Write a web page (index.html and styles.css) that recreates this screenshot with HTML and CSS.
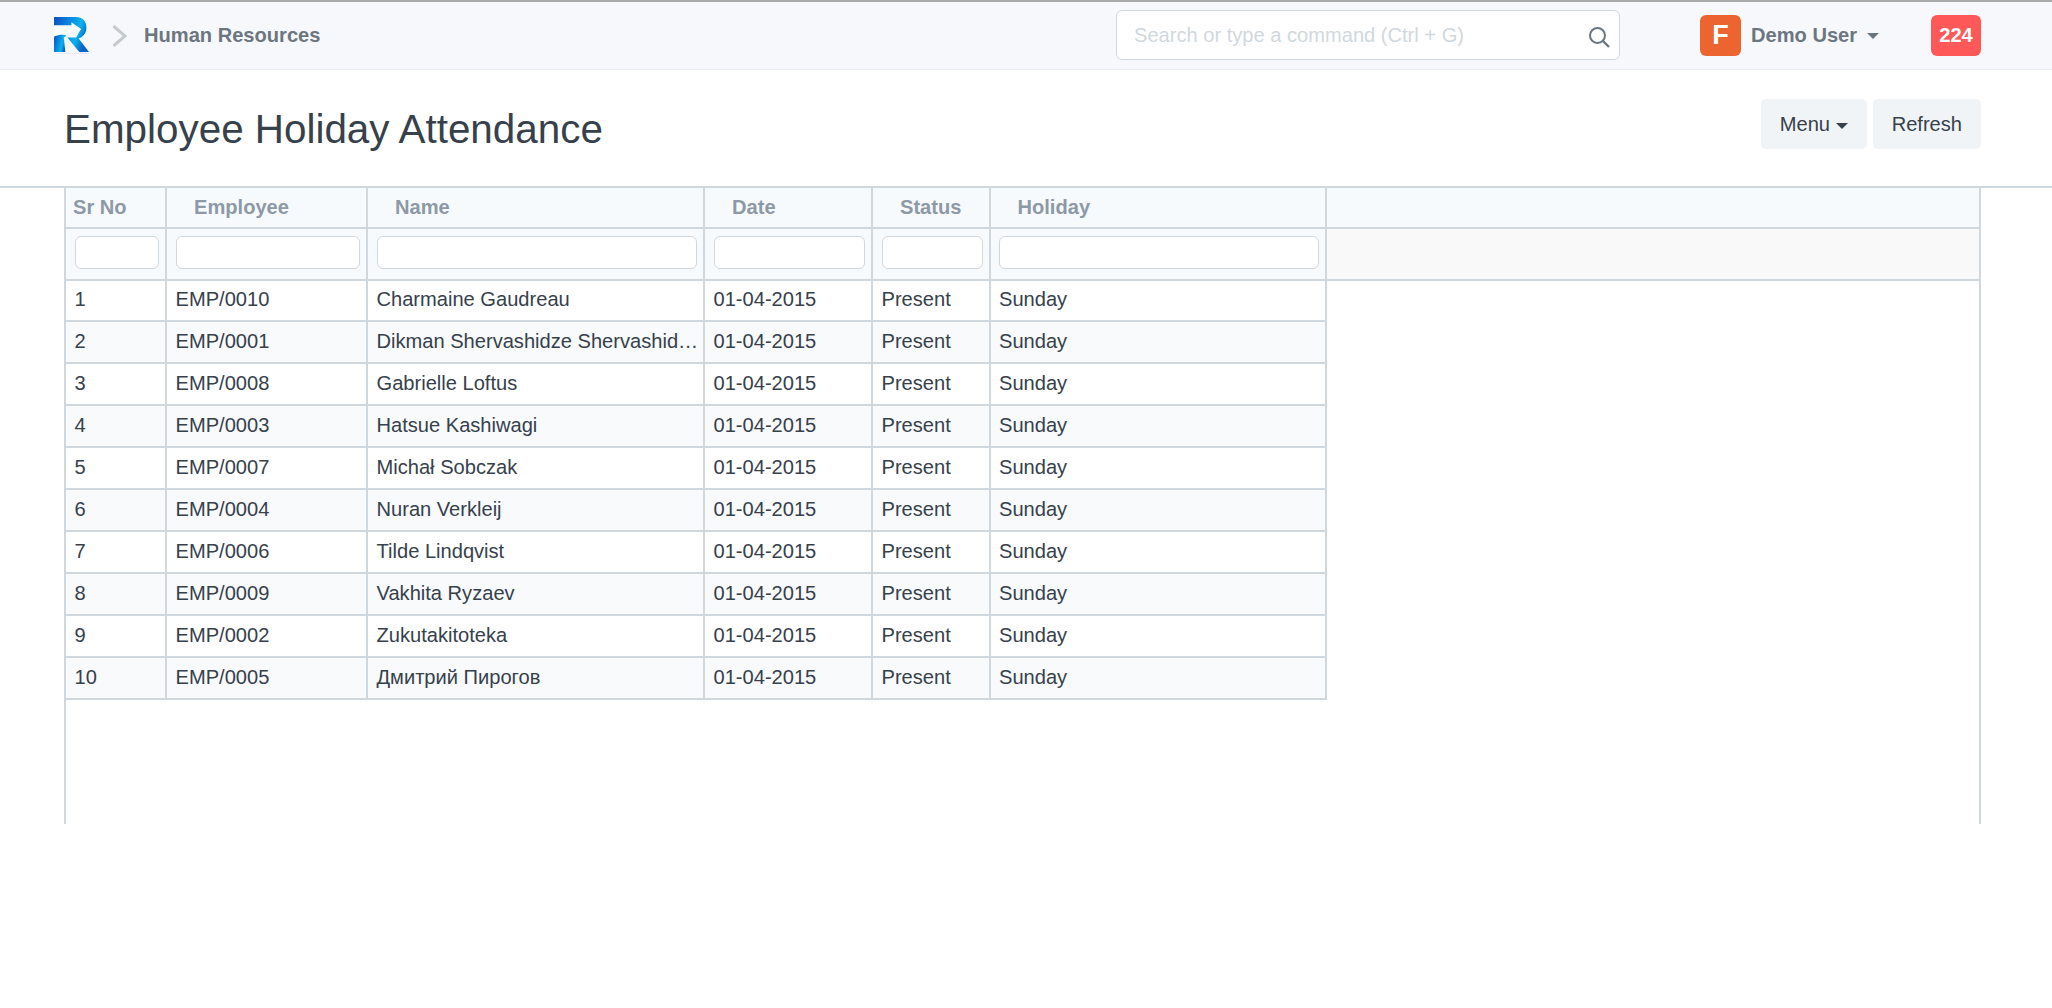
FILE: index.html
```html
<!DOCTYPE html>
<html lang="en">
<head>
<meta charset="utf-8">
<title>Employee Holiday Attendance</title>
<link rel="stylesheet" href="styles.css">
</head>
<body>
<header class="navbar">
  <div class="nav-left">
    <svg class="logo" viewBox="0 0 34 36" width="35" height="37">
      <defs>
        <linearGradient id="lg" x1="0" y1="0" x2="1" y2="0.35">
          <stop offset="0" stop-color="#0b4fc0"/>
          <stop offset="0.45" stop-color="#0a8ae0"/>
          <stop offset="0.75" stop-color="#0ab4ec"/>
          <stop offset="1" stop-color="#0a62c8"/>
        </linearGradient>
      </defs>
      <path fill="url(#lg)" d="M0 0H21C29 0 31.500 5 31.500 10.500C31.500 15.500 28.500 19.500 24 21L34 34H24.500L13 20H21.500L26 12L20 8H0Z"/>
      <path fill="url(#lg)" d="M0 19C5 17 9 17 12 18L9.500 20L11 34H0Z"/>
      <path fill="#fff" d="M0 9.500H17V5L26.500 12L17 18.500V15C10 15 4 16 0 19Z"/>
      <rect x="3" y="35" width="31" height="1" fill="#e6eafa"/>
    </svg>
    <svg class="chevron" viewBox="0 0 15 22" width="15" height="22">
      <path d="M1.500 1L13 11L1.500 21" fill="none" stroke="#c4cad0" stroke-width="3"/>
    </svg>
    <span class="crumb">Human Resources</span>
  </div>
  <div class="search">
    <input class="search-input" type="text" placeholder="Search or type a command (Ctrl + G)">
    <svg class="search-icon" viewBox="0 0 24 24" width="24" height="24">
      <circle cx="10.500" cy="10.500" r="7.500" fill="none" stroke="#6c7680" stroke-width="2"/>
      <path d="M16 16L22 22" stroke="#6c7680" stroke-width="2.400"/>
    </svg>
  </div>
  <div class="user">
    <span class="avatar">F</span>
    <span class="user-name">Demo User</span>
    <span class="caret caret-user"></span>
  </div>
  <span class="badge">224</span>
</header>

<section class="page-head">
  <h1 class="title">Employee Holiday Attendance</h1>
  <div class="actions">
    <button class="btn btn-menu">Menu <span class="caret caret-menu"></span></button>
    <button class="btn btn-refresh">Refresh</button>
  </div>
</section>

<main class="grid">
  <div class="row head">
    <div class="cell h-first">Sr No</div><div class="cell">Employee</div><div class="cell">Name</div><div class="cell">Date</div><div class="cell">Status</div><div class="cell">Holiday</div><div class="cell end"></div>
  </div>
  <div class="row filter">
    <div class="cell"><input class="fi" type="text"></div><div class="cell"><input class="fi" type="text"></div><div class="cell"><input class="fi" type="text"></div><div class="cell"><input class="fi" type="text"></div><div class="cell"><input class="fi" type="text"></div><div class="cell"><input class="fi" type="text"></div><div class="cell end"></div>
  </div>
  <div class="row data first"><div class="cell">1</div><div class="cell">EMP/0010</div><div class="cell">Charmaine Gaudreau</div><div class="cell">01-04-2015</div><div class="cell">Present</div><div class="cell">Sunday</div></div>
  <div class="row data alt"><div class="cell">2</div><div class="cell">EMP/0001</div><div class="cell">Dikman Shervashidze Shervashidze</div><div class="cell">01-04-2015</div><div class="cell">Present</div><div class="cell">Sunday</div></div>
  <div class="row data"><div class="cell">3</div><div class="cell">EMP/0008</div><div class="cell">Gabrielle Loftus</div><div class="cell">01-04-2015</div><div class="cell">Present</div><div class="cell">Sunday</div></div>
  <div class="row data alt"><div class="cell">4</div><div class="cell">EMP/0003</div><div class="cell">Hatsue Kashiwagi</div><div class="cell">01-04-2015</div><div class="cell">Present</div><div class="cell">Sunday</div></div>
  <div class="row data"><div class="cell">5</div><div class="cell">EMP/0007</div><div class="cell">Michał Sobczak</div><div class="cell">01-04-2015</div><div class="cell">Present</div><div class="cell">Sunday</div></div>
  <div class="row data alt"><div class="cell">6</div><div class="cell">EMP/0004</div><div class="cell">Nuran Verkleij</div><div class="cell">01-04-2015</div><div class="cell">Present</div><div class="cell">Sunday</div></div>
  <div class="row data"><div class="cell">7</div><div class="cell">EMP/0006</div><div class="cell">Tilde Lindqvist</div><div class="cell">01-04-2015</div><div class="cell">Present</div><div class="cell">Sunday</div></div>
  <div class="row data alt"><div class="cell">8</div><div class="cell">EMP/0009</div><div class="cell">Vakhita Ryzaev</div><div class="cell">01-04-2015</div><div class="cell">Present</div><div class="cell">Sunday</div></div>
  <div class="row data"><div class="cell">9</div><div class="cell">EMP/0002</div><div class="cell">Zukutakitoteka</div><div class="cell">01-04-2015</div><div class="cell">Present</div><div class="cell">Sunday</div></div>
  <div class="row data alt"><div class="cell">10</div><div class="cell">EMP/0005</div><div class="cell">Дмитрий Пирогов</div><div class="cell">01-04-2015</div><div class="cell">Present</div><div class="cell">Sunday</div></div>
</main>
</body>
</html>
```
FILE: styles.css
```css
* { box-sizing: border-box; }
html, body { margin: 0; padding: 0; background: #fff; }
body {
  font-family: "Liberation Sans", Arial, sans-serif;
  font-size: 20.1px;
  color: #36414c;
  height: 1008px;
  overflow: hidden;
}

.navbar {
  height: 70px;
  display: flex;
  align-items: center;
  padding: 0 71px 0 54px;
  background: #f7f8fb;
  border-top: 2px solid #a9abab;
  border-bottom: 1.500px solid #e8ebef;
}
.nav-left { display: flex; align-items: center; width: 1062px; }
.logo { display: block; margin-top: -1px; }
.chevron { margin-left: 23px; }
.crumb { margin-left: 17px; font-weight: 700; color: #6c7680; }

.search { position: relative; width: 504px; height: 50px; margin-top: -1px; }
.search-input {
  display: block;
  width: 100%;
  height: 100%;
  padding: 0 50px 0 17px;
  font: 20.1px "Liberation Sans", Arial, sans-serif;
  background: #fff;
  border: 1.500px solid #d1d8dd;
  border-radius: 6px;
  outline: none;
}
.search-input::placeholder { color: #d1d8dd; opacity: 1; }
.search-icon { position: absolute; right: 9px; top: 15px; }

.user { display: flex; align-items: center; margin-left: 80px; width: 231px; }
.avatar {
  width: 41px;
  height: 41px;
  border-radius: 6px;
  background: #ec6530;
  color: #fff;
  font-size: 27px;
  font-weight: 700;
  display: flex;
  align-items: center;
  justify-content: center;
}
.user-name { margin-left: 10px; font-weight: 700; color: #6c7680; }
.caret {
  display: inline-block;
  width: 0;
  height: 0;
  border-left: 6.500px solid transparent;
  border-right: 6.500px solid transparent;
  border-top: 6.500px solid #6c7680;
}
.caret-user { margin-left: 10px; }
.caret-menu { border-top-color: #36414c; vertical-align: 2px; }
.badge {
  width: 50px;
  height: 41px;
  border-radius: 6px;
  background: #ff5858;
  color: #fff;
  font-weight: 700;
  display: flex;
  align-items: center;
  justify-content: center;
}

.page-head {
  height: 118px;
  display: flex;
  align-items: center;
  justify-content: space-between;
  padding: 2px 71px 0 64px;
  border-bottom: 2px solid #d1d8dd;
}
.title { margin: 0; font-size: 40.400px; font-weight: 400; color: #36414c; }
.actions { display: flex; gap: 6px; margin-bottom: 10px; }
.btn {
  height: 50px;
  padding: 0 19px;
  font: 20.1px "Liberation Sans", Arial, sans-serif;
  color: #36414c;
  background: #f0f4f7;
  border: 0;
  border-radius: 5px;
}

.grid {
  margin-left: 64px;
  width: 1917px;
  height: 636px;
  border-left: 2px solid #d1d8dd;
  border-right: 2px solid #d1d8dd;
}
.row {
  display: grid;
  grid-template-columns: 101px 201px 337px 168px 117.500px 336.500px 1fr;
}
.cell {
  border-right: 2px solid #d1d8dd;
  border-bottom: 2px solid #d1d8dd;
  padding: 0 9px;
  display: flex;
  align-items: center;
  white-space: nowrap;
  overflow: hidden;
}
.head { height: 41px; }
.head .cell {
  background: #f7fafc;
  color: #8d99a6;
  font-weight: 700;
  padding-left: 27px;
  padding-bottom: 1px;
}
.head .h-first { padding-left: 7px; }
.head .end { border-right: 0; }
.filter { height: 52px; }
.filter .cell { background: #f7fafc; padding: 0 6px 3px 8.500px; }
.filter .end { background: #f9f9f9; border-right: 0; }
.fi {
  display: block;
  width: 100%;
  height: 33px;
  padding: 0 6px;
  background: #fff;
  border: 1.500px solid #d1d8dd;
  border-radius: 6px;
  outline: none;
}
.data { height: 42px; }
.data .cell { display: block; line-height: 39px; padding: 0 4px 0 8.500px; text-overflow: ellipsis; }
.first { height: 41px; }
.first .cell { line-height: 37px; }
.alt .cell { background: #f9fafc; }
```
